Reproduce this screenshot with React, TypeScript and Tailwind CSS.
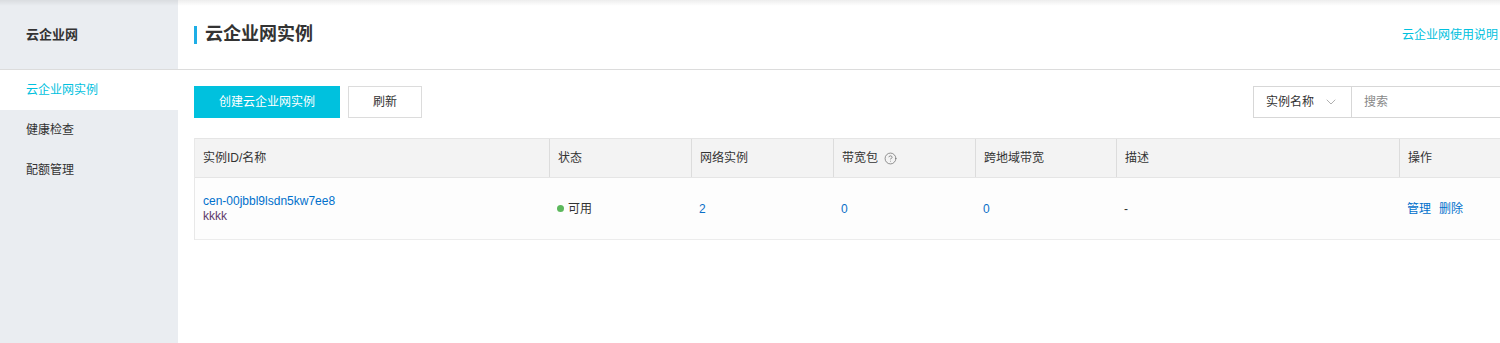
import { ChevronDown, CircleHelp } from "lucide-react";

const font = { fontFamily: '"Liberation Sans", "Noto Sans CJK SC", sans-serif' };

const navItems = ["云企业网实例", "健康检查", "配额管理"];

const columns = [
  { title: "实例ID/名称", w: "w-[354px]" },
  { title: "状态", w: "w-[142px]" },
  { title: "网络实例", w: "w-[142px]" },
  { title: "带宽包", w: "w-[142px]", help: true },
  { title: "跨地域带宽", w: "w-[141px]" },
  { title: "描述", w: "w-[283px]" },
  { title: "操作", w: "flex-1" },
];

const Sidebar = () => (
  <aside className="w-[178px] shrink-0 bg-[#eaedf1]">
    <div className="h-[70px] border-b border-[#dcdcdc] flex items-center px-[26px] text-[13px] font-bold text-[#333]">
      云企业网
    </div>
    {navItems.map((item, i) => (
      <div
        key={item}
        className={
          i === 0
            ? "h-10 flex items-center px-[26px] text-[12px] bg-white text-[#00c1de]"
            : "h-10 flex items-center px-[26px] text-[12px] text-[#333]"
        }
      >
        {item}
      </div>
    ))}
  </aside>
);

const Toolbar = () => (
  <div className="mt-4 flex items-center justify-between">
    <div className="flex gap-2">
      <button className="h-8 w-[146px] bg-[#00c1de] text-white text-[12px]">创建云企业网实例</button>
      <button className="h-8 w-[74px] border border-[#dcdcdc] bg-white text-[12px] text-[#333]">刷新</button>
    </div>
    <div className="flex h-8 mr-[-28px]">
      <div className="w-[99px] border border-[#d7d7d7] flex items-center justify-between pl-[12px] pr-[12px] text-[12px] text-[#333]">
        实例名称
        <ChevronDown size={16} strokeWidth={1} className="text-[#888]" />
      </div>
      <div className="w-[160px] border border-l-0 border-[#d7d7d7] flex items-center pl-[12px] text-[12px] text-[#888]">
        搜索
      </div>
    </div>
  </div>
);

const Table = () => (
  <div className="mt-5 mr-[-20px] border-l border-[#e8e8e8] text-[12px]">
    <div className="flex h-10 bg-[#f3f3f3] border-t border-b border-[#e5e5e5]">
      {columns.map((c, i) => (
        <div
          key={c.title}
          className={`${c.w} flex items-center px-[8px] text-[#333] ${i > 0 ? "border-l border-[#dcdcdc]" : ""}`}
        >
          {c.title}
          {c.help && <CircleHelp size={13} strokeWidth={1.3} className="ml-[6px] text-[#666]" />}
        </div>
      ))}
    </div>
    <div className="flex h-[62px] bg-[#fdfdfd] border-b border-[#ececec] items-center">
      <div className="w-[354px] px-[8px] leading-[15px]">
        <div className="text-[#0070cc]">cen-00jbbl9lsdn5kw7ee8</div>
        <div className="text-[#5e3a6a]">kkkk</div>
      </div>
      <div className="w-[142px] px-[8px] flex items-center text-[#333]">
        <span className="w-[7px] h-[7px] rounded-full bg-[#5cb85c] mr-[4px]" />
        可用
      </div>
      <div className="w-[142px] px-[8px] text-[#0a6fc8]">2</div>
      <div className="w-[142px] px-[8px] text-[#0a6fc8]">0</div>
      <div className="w-[141px] px-[8px] text-[#0a6fc8]">0</div>
      <div className="w-[283px] px-[8px] text-[#333]">-</div>
      <div className="flex-1 px-[8px] flex gap-[8px] text-[#0070cc]">
        <span>管理</span>
        <span>删除</span>
      </div>
    </div>
  </div>
);

export default function App() {
  return (
    <div
      style={font}
      className="relative flex w-[1500px] h-[343px] overflow-hidden bg-white"
    >
      <div className="pointer-events-none absolute inset-x-0 top-0 h-[6px] bg-gradient-to-b from-[rgba(0,0,0,0.07)] to-transparent" />
      <Sidebar />
      <main className="w-[1322px] shrink-0">
        <header className="h-[70px] border-b border-[#dcdcdc] flex items-center justify-between pl-4 pr-[2px]">
          <div className="flex items-center gap-2">
            <span className="w-[3px] h-[18px] bg-[#1eaee6]" />
            <h1 className="text-[18px] font-bold text-[#333]">云企业网实例</h1>
          </div>
          <a className="text-[12px] text-[#00c1de]">云企业网使用说明</a>
        </header>
        <div className="px-4">
          <Toolbar />
          <Table />
        </div>
      </main>
    </div>
  );
}
